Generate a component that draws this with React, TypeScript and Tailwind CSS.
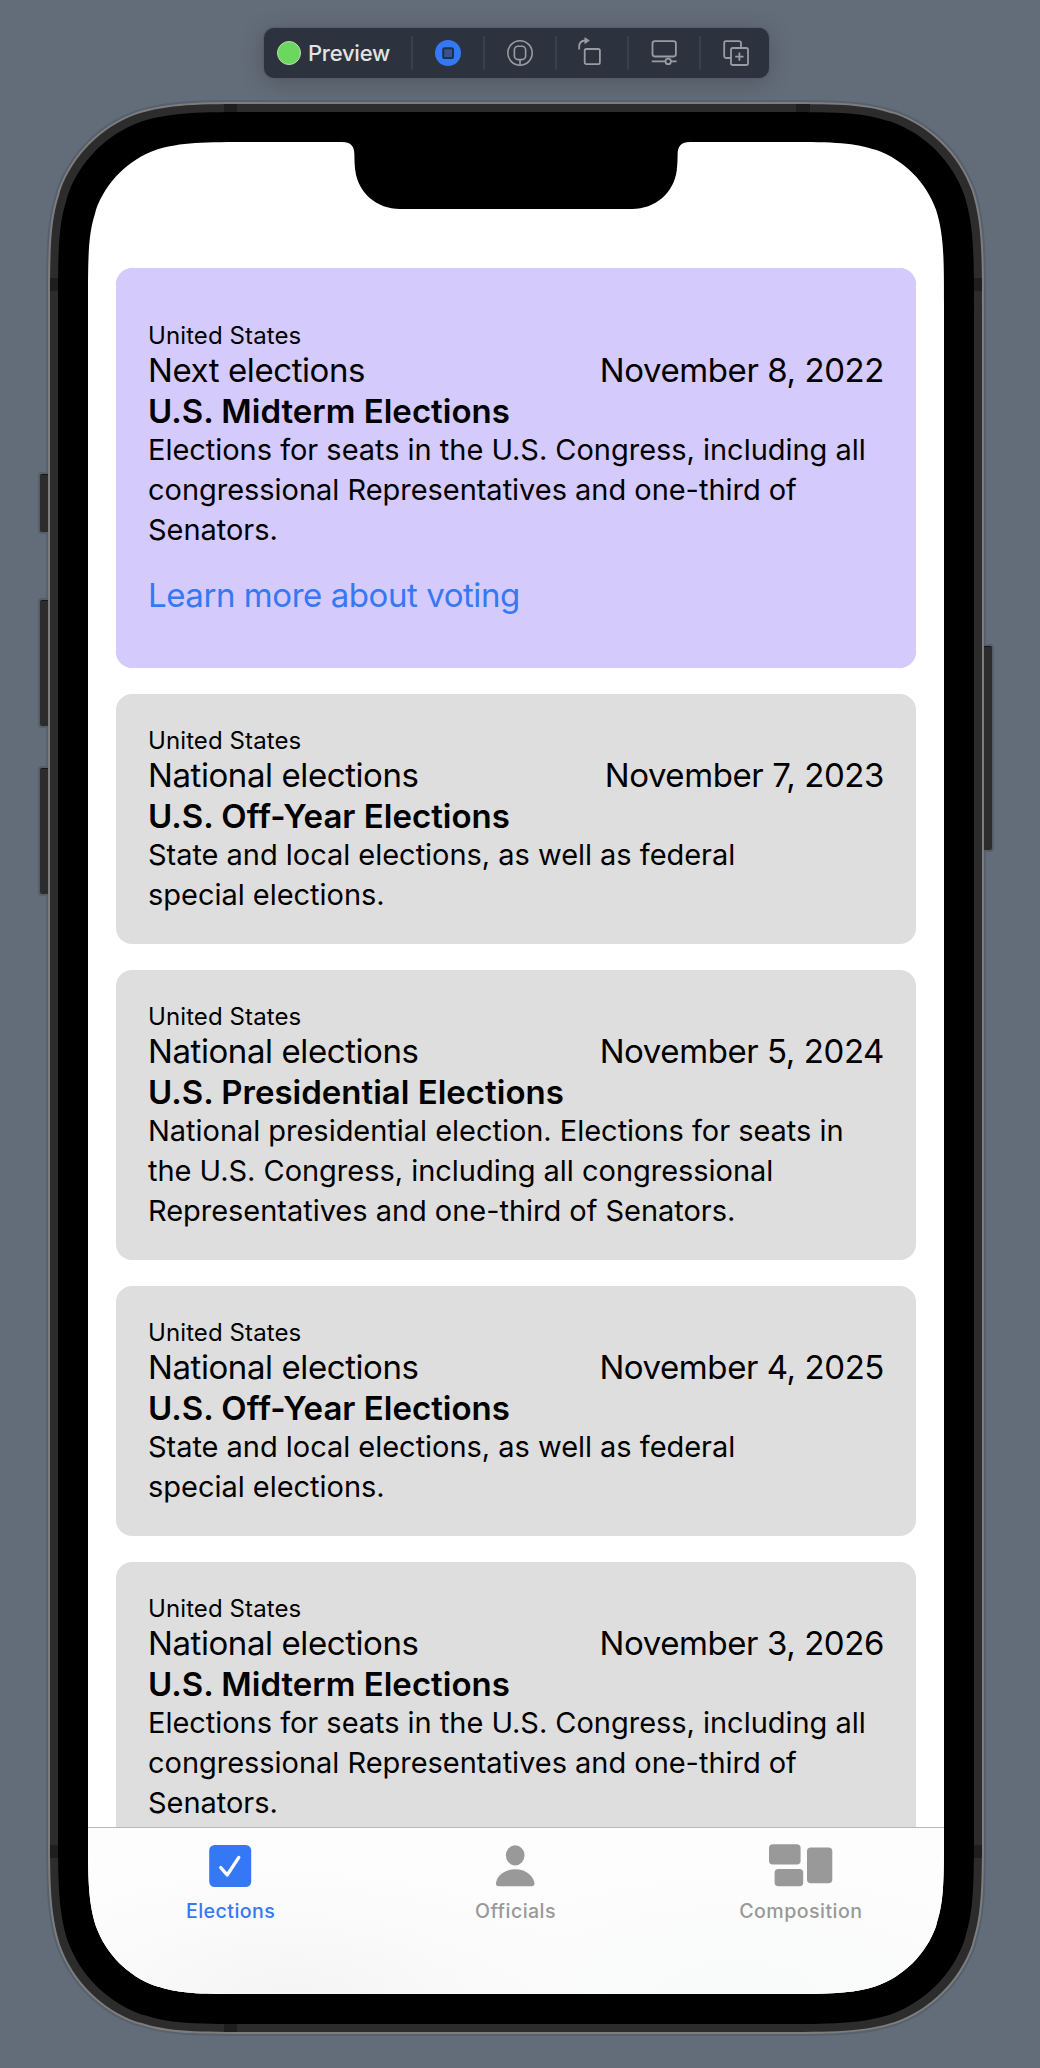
import type { CSSProperties, ReactNode } from 'react';

type Election = {
  kind: string;
  date: string;
  title: string;
  lines: string[];
  link?: string;
};

const midterm = [
  'Elections for seats in the U.S. Congress, including all',
  'congressional Representatives and one-third of',
  'Senators.',
];
const offYear = ['State and local elections, as well as federal', 'special elections.'];

const elections: Election[] = [
  { kind: 'Next elections', date: 'November 8, 2022', title: 'U.S. Midterm Elections', lines: midterm, link: 'Learn more about voting' },
  { kind: 'National elections', date: 'November 7, 2023', title: 'U.S. Off-Year Elections', lines: offYear },
  {
    kind: 'National elections',
    date: 'November 5, 2024',
    title: 'U.S. Presidential Elections',
    lines: [
      'National presidential election. Elections for seats in',
      'the U.S. Congress, including all congressional',
      'Representatives and one-third of Senators.',
    ],
  },
  { kind: 'National elections', date: 'November 4, 2025', title: 'U.S. Off-Year Elections', lines: offYear },
  { kind: 'National elections', date: 'November 3, 2026', title: 'U.S. Midterm Elections', lines: midterm },
];

/** Clip path of a w×h box whose corners have continuous curvature of radius r. */
function continuousCorners(w: number, h: number, r: number): CSSProperties {
  const a = 1.528665 * r, b = 1.088493 * r, c = 0.868407 * r, d = 0.631494 * r;
  const e = 0.074911 * r, f = 0.372824 * r, g = 0.16906 * r;
  const d2 = 0.669934 * r, e2 = 0.065496 * r;
  const path = [
    `M${a} 0 H${w - a}`,
    `C${w - b} 0 ${w - c} 0 ${w - d2} ${e2} L${w - d} ${e}`,
    `C${w - f} ${g} ${w - g} ${f} ${w - e} ${d} C${w} ${c} ${w} ${b} ${w} ${a}`,
    `V${h - a} C${w} ${h - b} ${w} ${h - c} ${w - e2} ${h - d2} L${w - e} ${h - d}`,
    `C${w - g} ${h - f} ${w - f} ${h - g} ${w - d} ${h - e} C${w - c} ${h} ${w - b} ${h} ${w - a} ${h}`,
    `H${a} C${b} ${h} ${c} ${h} ${d2} ${h - e2} L${d} ${h - e}`,
    `C${f} ${h - g} ${g} ${h - f} ${e} ${h - d} C0 ${h - c} 0 ${h - b} 0 ${h - a}`,
    `V${a} C0 ${b} 0 ${c} ${e2} ${d2} L${e} ${d}`,
    `C${g} ${f} ${f} ${g} ${d} ${e} C${c} 0 ${b} 0 ${a} 0 Z`,
  ].join(' ');
  return { clipPath: `path('${path}')` };
}

function Icon({ children }: { children: ReactNode }) {
  return (
    <svg viewBox="0 0 32 32" className="size-8" fill="none" stroke="#989ca3" strokeWidth="1.8">
      {children}
    </svg>
  );
}

function Toolbar() {
  const icons = [
    <Icon key="stop">
      <circle cx="16" cy="16" r="13" fill="#3478f6" stroke="none" />
      <rect x="11.2" y="11.2" width="9.8" height="9.8" rx="1.6" fill="#37548c" stroke="#1f2f52" strokeWidth="2" />
    </Icon>,
    <Icon key="inspect">
      <circle cx="16" cy="16" r="12.2" strokeWidth="1.6" />
      <rect x="10.4" y="9.2" width="11.2" height="13.4" rx="3.6" strokeWidth="1.6" />
      <path d="M16 22.6V28" strokeWidth="1.6" />
    </Icon>,
    <Icon key="rotate">
      <rect x="8.7" y="12" width="15.2" height="15.2" rx="1.6" />
      <path d="M3.2 12.4V9.8C3.2 6 5.4 3.6 9.2 3.5" />
      <path d="M8.8 .6L13.4 3.6L8.8 6.7Z" fill="#989ca3" strokeWidth=".6" />
    </Icon>,
    <Icon key="settings">
      <rect x="4.5" y="4.2" width="23.4" height="15.3" rx="2.4" />
      <path d="M3.8 24.4H17.4M23 24.4H28.6" />
      <circle cx="20.2" cy="24.4" r="2.7" />
    </Icon>,
    <Icon key="duplicate">
      <path d="M10.9 21H6a1.8 1.8 0 0 1-1.8-1.8V6A1.8 1.8 0 0 1 6 4.2h13.2A1.8 1.8 0 0 1 21 6v5" />
      <rect x="11" y="11" width="17" height="17" rx="1.8" />
      <path d="M15.2 19.6H23.6M19.4 15.4V23.8" />
    </Icon>,
  ];
  return (
    <div className="ml-[216px] flex h-[50px] w-[505px] items-center rounded-[10px] bg-[#2c323e] shadow-[0_0_0_1px_#555d68,0_4px_24px_rgba(0,0,0,0.22)]">
      <div className="ml-[13px] mr-[7px] size-6 shrink-0 rounded-full border border-[#b9dfb5] bg-[#6bd75f]" />
      <div className="w-[103px] shrink-0 text-[22px] font-medium leading-[50px] tracking-[-0.25px] text-[#e2e3e5]">Preview</div>
      {icons.map((icon) => (
        <div key={icon.key} className="flex w-[72px] shrink-0 items-center">
          <div className="h-[34px] w-[2px] bg-[#393f4b]" />
          <div className="ml-[19px]">{icon}</div>
        </div>
      ))}
    </div>
  );
}

function Card({ item }: { item: Election }) {
  const featured = item.link !== undefined;
  return (
    <article
      className={
        featured
          ? 'h-[400px] shrink-0 rounded-2xl bg-[#d4cafb] px-8 pt-[53px]'
          : 'shrink-0 rounded-2xl bg-[#dedede] px-8 pb-[29px] pt-[32px]'
      }
    >
      <p className="text-[24px] leading-[29px] tracking-[0.1px]">United States</p>
      <div className="flex justify-between text-[33px] leading-[41px] tracking-[-0.42px]">
        <p>{item.kind}</p>
        <p>{item.date}</p>
      </div>
      <h2 className="text-[33px] font-semibold leading-[40px]">{item.title}</h2>
      <div className="mt-[-1px] text-[29px] leading-[40px] tracking-[-0.03px]">
        {item.lines.map((line) => (
          <p key={line} className="whitespace-nowrap">{line}</p>
        ))}
      </div>
      {featured && (
        <a className="mt-[25px] block text-[33px] leading-[40px] tracking-[-0.44px] text-[#3478f6]">{item.link}</a>
      )}
    </article>
  );
}

function TabBar() {
  return (
    <nav className="grid h-[167px] shrink-0 grid-cols-3 border-t border-[#b8b8b8] bg-[radial-gradient(ellipse_36%_75%_at_24%_100%,#f5f5f5,transparent),radial-gradient(ellipse_36%_75%_at_76%_100%,#f8f9f9,transparent)] bg-[#fdfdfd] text-center text-[19.6px] font-medium leading-6 tracking-[0.45px] text-[#999]">
      <div className="flex flex-col items-center pt-[16px] text-[#3478f6]">
        <svg viewBox="0 0 64 44" className="h-11 w-16">
          <rect x="10.2" y="1" width="42" height="42" rx="5.5" fill="#3478f6" />
          <path d="M21.8 23.6L28.2 31L39.8 13.4" fill="none" stroke="#fff" strokeWidth="3.3" strokeLinecap="round" strokeLinejoin="round" />
        </svg>
        <span className="mt-[11px]">Elections</span>
      </div>
      <div className="flex flex-col items-center pt-[16px]">
        <svg viewBox="0 0 64 44" className="h-11 w-16" fill="#999">
          <ellipse cx="31.2" cy="11.4" rx="9.3" ry="10.2" />
          <path d="M12 39.8C12 33 20 25.2 31.2 25.2S50.4 33 50.4 39.8C50.4 41.4 49.4 42.2 47.8 42.2H14.6C13 42.2 12 41.4 12 39.8Z" />
        </svg>
        <span className="mr-px mt-[11px]">Officials</span>
      </div>
      <div className="flex flex-col items-center pt-[16px]">
        <svg viewBox="0 0 64 44" className="h-11 w-16" fill="#999">
          <rect x="0" y="0.3" width="31.6" height="20.2" rx="3.8" />
          <rect x="5.6" y="25" width="28.6" height="17.2" rx="3.8" />
          <rect x="38" y="3.5" width="25.3" height="35.8" rx="3.8" />
        </svg>
        <span className="mr-px mt-[11px]">Composition</span>
      </div>
    </nav>
  );
}

function Phone() {
  return (
    <div className="relative mt-[22px] h-[1936px] w-[940px]">
      <div className="relative bg-[#566170] p-[2px]" style={continuousCorners(940, 1936, 141)}>
        <div className="bg-[#7f7d7b] p-[2px]" style={continuousCorners(936, 1932, 139)}>
          <div className="relative bg-[#2c2c2c] p-[8px]" style={continuousCorners(932, 1928, 137)}>
            <div className="absolute left-[174px] top-0 h-2 w-[13px] bg-[#1e1e1e]" />
            <div className="absolute left-[746px] top-0 h-2 w-[14px] bg-[#1e1e1e]" />
            <div className="absolute bottom-0 left-[174px] h-2 w-[13px] bg-[#1e1e1e]" />
            <div className="absolute left-0 top-[174px] h-[13px] w-full bg-[#1e1e1e]" />
            <div className="absolute left-0 top-[1741px] h-[13px] w-full bg-[#1e1e1e]" />
            <div className="relative bg-black p-[30px]" style={continuousCorners(916, 1912, 131)}>
              <main
                className="relative flex h-[1852px] w-[856px] flex-col overflow-hidden bg-white"
                style={continuousCorners(856, 1852, 107)}
              >
                <svg viewBox="0 0 352 68" className="absolute left-[252px] top-0 h-[68px] w-[352px]">
                  <path d="M0 0H2C11 0 14.4 4 14.4 13C14.4 20 14.8 24 15.2 28C18 51 37 67 60 67H292C315 67 334 51 336.8 28C337.2 24 337.6 20 337.6 13C337.6 4 341 0 350 0H352Z" />
                </svg>
                <div className="flex min-h-0 flex-1 flex-col gap-[26px] overflow-hidden px-7 pt-[126px]">
                  {elections.map((item) => (
                    <Card key={item.date} item={item} />
                  ))}
                </div>
                <TabBar />
              </main>
            </div>
          </div>
        </div>
      </div>
      <div className="absolute left-[-6px] top-[374px] h-[58px] w-2 rounded-l-[2px] border-t border-black/50 bg-[#2c2c2c] shadow-[0_0_0_2px_#555f6a] [clip-path:inset(-2px_0_-2px_-2px)]" />
      <div className="absolute left-[-6px] top-[500px] h-[126px] w-2 rounded-l-[2px] border-t border-black/50 bg-[#2c2c2c] shadow-[0_0_0_2px_#555f6a] [clip-path:inset(-2px_0_-2px_-2px)]" />
      <div className="absolute left-[-6px] top-[668px] h-[126px] w-2 rounded-l-[2px] border-t border-black/50 bg-[#2c2c2c] shadow-[0_0_0_2px_#555f6a] [clip-path:inset(-2px_0_-2px_-2px)]" />
      <div className="absolute right-[-6px] top-[546px] h-[204px] w-2 rounded-r-[2px] border-t border-black/50 bg-[#2c2c2c] shadow-[0_0_0_2px_#555f6a] [clip-path:inset(-2px_-2px_-2px_0)]" />
    </div>
  );
}

export default function App() {
  return (
    <div className="h-[2068px] w-[1040px] overflow-hidden bg-[#636d79] pl-[46px] pt-[28px] font-['Inter',sans-serif] text-black">
      <div className="ml-[2px]">
        <Toolbar />
      </div>
      <Phone />
    </div>
  );
}
